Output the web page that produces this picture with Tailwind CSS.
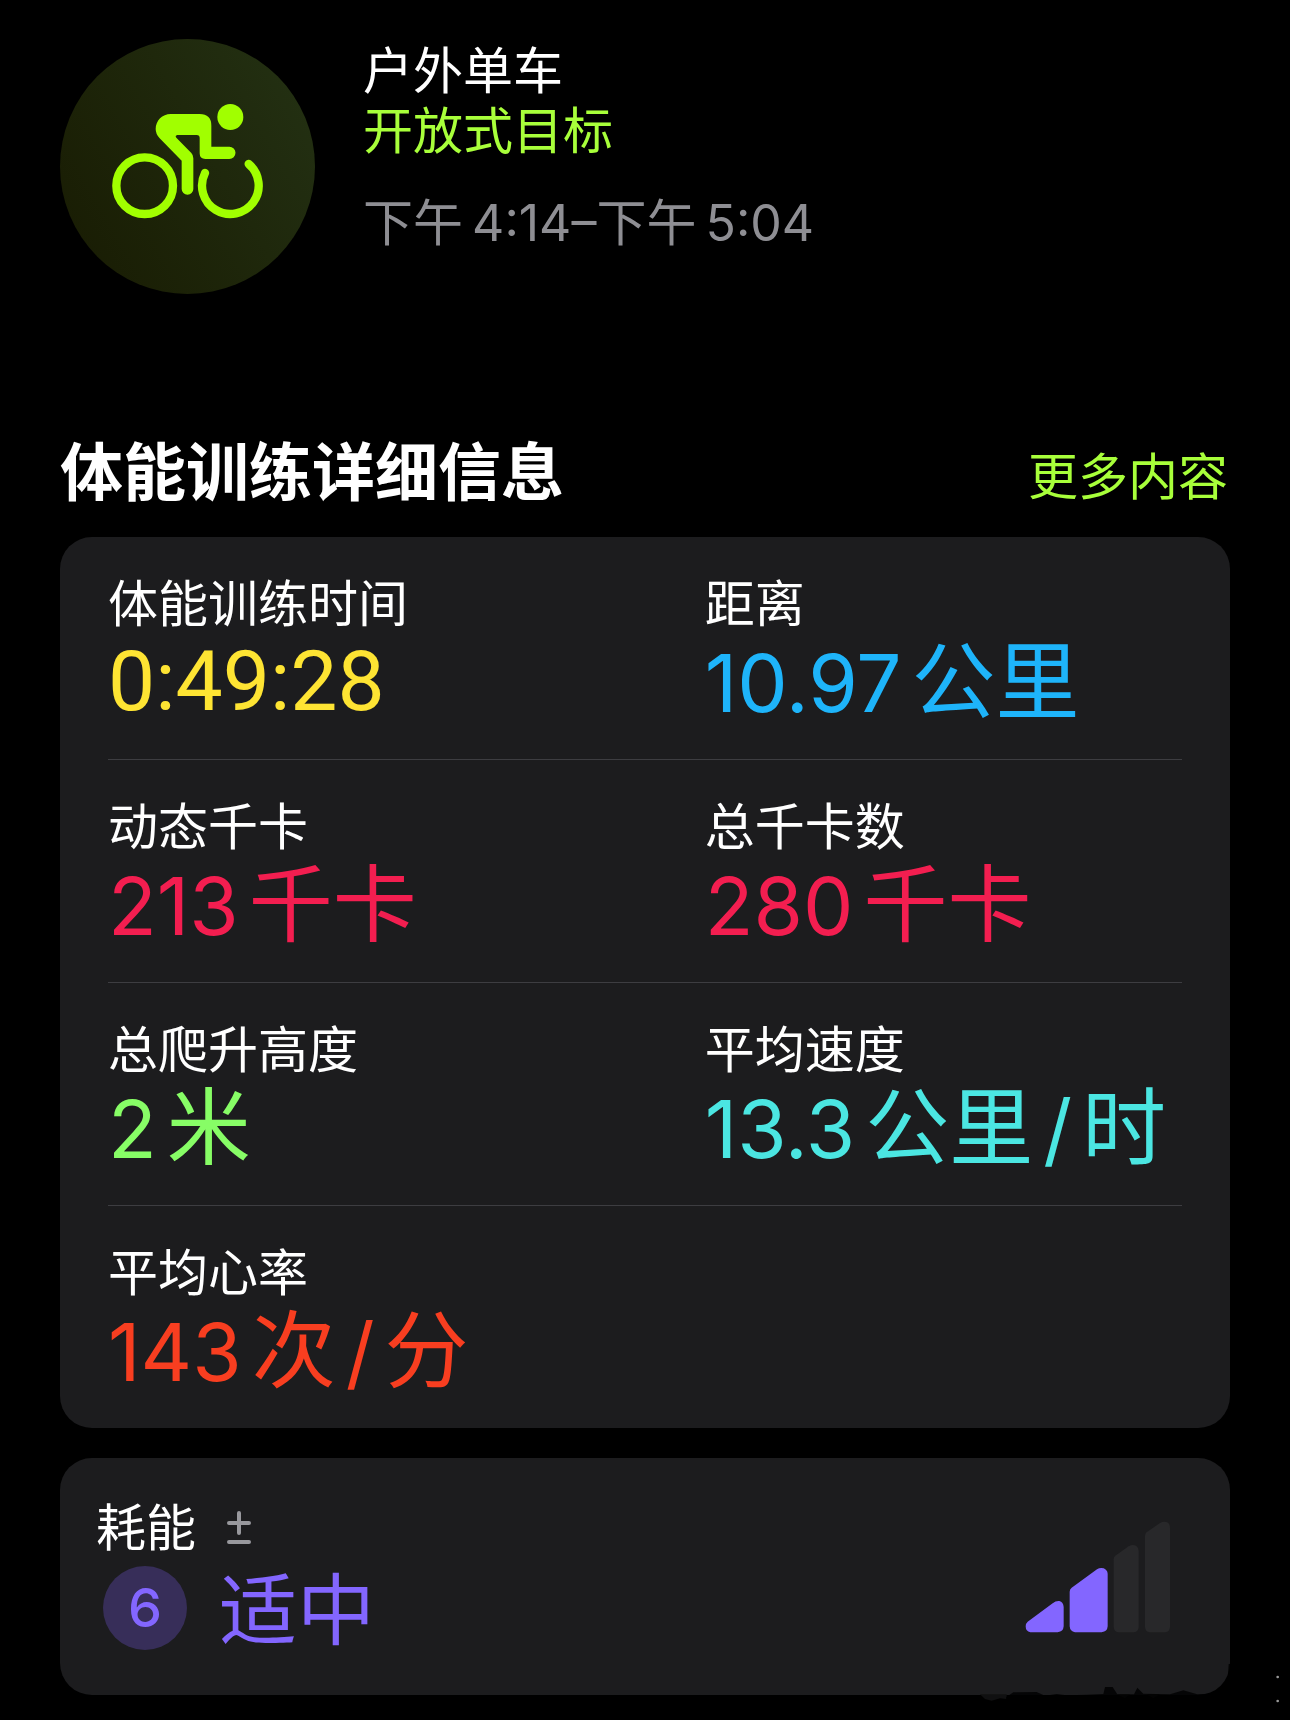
<!DOCTYPE html>
<html lang="zh-CN">
<head>
  <meta charset="UTF-8" />
  <meta name="viewport" content="width=device-width, initial-scale=1">
  <title>户外单车 | 体能训练</title>
  <script src="https://cdn.jsdelivr.net/npm/@tailwindcss/browser@4"></script>
</head>
<body class="bg-black text-white font-['Inter','Noto_Sans_CJK_SC',sans-serif] text-[50px] leading-[60px]">

  <main class="px-[60px] pt-[39px] pb-6">

    <!-- Encabezado del entrenamiento -->
    <header class="flex gap-12">
      <div class="size-[255px] shrink-0 rounded-full bg-linear-60 from-[#181b03] to-[#243214]">
        <svg class="size-full text-[#a1ff00]" viewBox="30 27 765 765" fill="currentColor" aria-hidden="true">
          <circle cx="541" cy="261" r="39" />
          <path d="M362 252H449Q484 252 484 287V350H538A18 18 0 0 1 538 387H466Q449 387 449 370V324Q449 315 440 315H382Q374 317 379 323L424 369Q430 375 430 385V477A17 17 0 0 1 395 477V392L329 325Q317 312 317 297C317 272 337 252 362 252Z" />
          <g fill="none" stroke="currentColor" stroke-width="25" stroke-linecap="round">
            <circle cx="284" cy="467" r="85" />
            <path d="M465 429A85 85 0 1 0 596 402" />
          </g>
        </svg>
      </div>
      <div class="pt-0.5">
        <h1>户外单车</h1>
        <p class="text-[#a8ff3a]">开放式目标</p>
        <p class="mt-8 text-[#8e8e93]">下午&thinsp;4:14–下午&thinsp;5:04</p>
      </div>
    </header>

    <!-- Detalles -->
    <section class="mt-[138px]">
      <div class="flex items-baseline justify-between">
        <h2 class="text-[63px] leading-[80px] font-bold">体能训练详细信息</h2>
        <a href="#" class="pr-0.5 text-[#a8ff3a]">更多内容</a>
      </div>

      <div class="mt-[25px] rounded-[32px] bg-[#1c1c1e] px-12">
        <dl class="grid grid-cols-[5fr_4fr] border-b border-[#3d3d41] pt-[37px] pb-7">
          <div>
            <dt>体能训练时间</dt>
            <dd class="font-['Roboto',sans-serif] text-[84px] leading-[96px] text-[#fee433]">0:49:28</dd>
          </div>
          <div>
            <dt>距离</dt>
            <dd class="flex items-baseline gap-2.5 text-[84px] leading-[96px] whitespace-nowrap text-[#1eb4fa]"><span class="text-[80px]">10.97</span> <span>公里</span></dd>
          </div>
        </dl>
        <dl class="grid grid-cols-[5fr_4fr] border-b border-[#3d3d41] pt-[37px] pb-7">
          <div>
            <dt>动态千卡</dt>
            <dd class="flex items-baseline gap-2.5 text-[84px] leading-[96px] whitespace-nowrap text-[#f31e50]"><span class="text-[80px]">213</span> <span>千卡</span></dd>
          </div>
          <div>
            <dt>总千卡数</dt>
            <dd class="flex items-baseline gap-2.5 text-[84px] leading-[96px] whitespace-nowrap text-[#f31e50]"><span class="text-[80px]">280</span> <span>千卡</span></dd>
          </div>
        </dl>
        <dl class="grid grid-cols-[5fr_4fr] border-b border-[#3d3d41] pt-[37px] pb-7">
          <div>
            <dt>总爬升高度</dt>
            <dd class="flex items-baseline gap-2.5 text-[84px] leading-[96px] whitespace-nowrap text-[#87fd66]"><span class="text-[80px]">2</span> <span>米</span></dd>
          </div>
          <div>
            <dt>平均速度</dt>
            <dd class="flex items-baseline gap-2.5 text-[84px] leading-[96px] whitespace-nowrap text-[#4be6e2]"><span class="text-[80px]">13.3</span> <span>公里</span> <span class="text-[80px]">/</span> <span>时</span></dd>
          </div>
        </dl>
        <dl class="pt-[37px] pb-7">
          <dt>平均心率</dt>
          <dd class="flex items-baseline gap-2.5 text-[84px] leading-[96px] whitespace-nowrap text-[#f83e20]"><span class="text-[80px]">143</span> <span>次</span> <span class="text-[80px]">/</span> <span>分</span></dd>
        </dl>
      </div>
    </section>

    <!-- Esfuerzo -->
    <section class="relative mt-[30px] flex items-center justify-between rounded-[32px] bg-[#1c1c1e] pt-10 pr-[60px] pb-[45px] pl-9">
      <div>
        <div class="flex items-center gap-[30px]">
          <h2>耗能</h2>
          <svg class="h-[34px] w-[26px]" viewBox="0 0 26 34" fill="none" stroke="#98989d" stroke-width="4" stroke-linecap="round" aria-hidden="true">
            <path d="M3 12H23M13 2V22M3 31H23" />
          </svg>
        </div>
        <div class="mt-2 ml-[7px] flex items-center gap-8">
          <span class="flex size-[84px] items-center justify-center rounded-full bg-[#372e59] text-[54px] font-medium text-[#8366ff]">6</span>
          <span class="pt-1.5 text-[78px] leading-[78px] text-[#8366ff]">适中</span>
        </div>
      </div>
      <svg class="mt-1.5 h-[112px] w-[145px]" viewBox="0 0 435 336" aria-hidden="true">
        <path fill="#8366ff" d="M8 302L83 247Q92 239 103 240Q115 243 116 258V316Q115 332 98 334H16Q2 331 2 316Q2 307 8 302Z" />
        <path fill="#8366ff" d="M140 200L216 145Q225 139 236 142Q247 147 248 158V316Q247 332 230 334H150Q135 331 134 316V212Q134 204 140 200Z" />
        <path fill="#28282a" d="M271 104L311 76Q322 69 333 74Q341 79 341 90V318Q340 333 327 334H280Q267 333 266 318V115Q266 108 271 104Z" />
        <path fill="#28282a" d="M365 34L405 6Q416 -1 427 4Q435 9 435 20V318Q434 333 421 334H374Q361 333 360 318V45Q360 38 365 34Z" />
      </svg>

      <!-- Borde gastado de la esquina -->
      <svg class="pointer-events-none absolute -right-[60px] -bottom-6 h-[70px] w-[320px]" viewBox="0 0 960 210" aria-hidden="true">
        <path fill="#101011" d="M30 136L45 150L65 155L90 148L110 150V136ZM440 136L465 148L480 136ZM530 136L550 148L570 136Z" />
        <path fill="#000" fill-opacity="0.8" d="M108 145L130 130L200 129L225 140L260 135L290 139L350 137L400 135L405 114L428 114L442 136L492 136L502 116L520 134L600 136L640 124L682 136L720 134L758 116L772 100L776 45H790V150H108Z" />
        <circle cx="923" cy="84" r="4" fill="#999" />
        <circle cx="923" cy="156" r="4" fill="#999" />
      </svg>
    </section>

  </main>

</body>
</html>
